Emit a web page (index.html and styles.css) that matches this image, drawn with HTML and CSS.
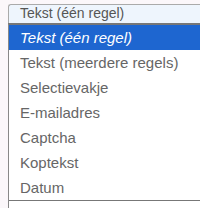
FILE: index.html
```html
<!DOCTYPE html>
<html lang="nl">
  <head>
    <meta charset="UTF-8" />
    <title>Veldtype</title>
    <link rel="stylesheet" href="styles.css">
  </head>
  <body>
    <div class="picker">
      <div class="select">Tekst (één regel)</div>
      <div class="dropdown">
        <ul class="options">
          <li class="selected">Tekst (één regel)</li>
          <li>Tekst (meerdere regels)</li>
          <li>Selectievakje</li>
          <li>E-mailadres</li>
          <li>Captcha</li>
          <li>Koptekst</li>
          <li>Datum</li>
        </ul>
      </div>
    </div>
  </body>
</html>
```
FILE: styles.css
```css
body {
  margin: 0;
  background-color: #fbf7fa;
  font-family: "Liberation Sans", Arial, sans-serif;
  font-size: 15px;
}
.picker {
  padding: 4px 0 0 8px;
}
.select {
  height: 18px;
  line-height: 17px;
  padding-left: 11px;
  border: 1px solid #aaa;
  border-right: none;
  border-bottom: none;
  border-radius: 3px 0 0 0;
  background-color: #eef5fd;
  color: #555;
  font-size: 14px;
}
.dropdown {
  background-color: white;
  border-top: 2px solid #777;
  border-left: 1px solid #888;
  padding-bottom: 12px;
}
.options {
  list-style: none;
  margin: 0;
  padding: 0;
  border-bottom: 1px solid #777;
}
.options li {
  height: 25px;
  line-height: 25px;
  padding-left: 11px;
  color: #666;
}
.options li.selected {
  background-color: #1e66d0;
  color: white;
  font-style: italic;
}
```
